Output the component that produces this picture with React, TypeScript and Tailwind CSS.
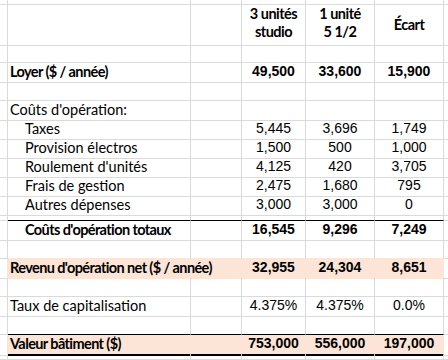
type Line = "gray" | "peach" | "black" | "black2";

type RowProps = {
  h: string;
  fill?: boolean;
  bottom?: Line;
  label?: string;
  indent?: boolean;
  bold?: boolean;
  vals?: string[];
  valBold?: boolean;
};

const cols = "grid grid-cols-[8px_183px_51px_64px_69px_69px_4px]";
const label = "font-['Lato',sans-serif] text-[14.5px] leading-[17px] text-black";
const num = "font-['Liberation_Sans',Arial,sans-serif] text-[14px] leading-[16px] text-black";

const bottomClass: Record<Line, string> = {
  gray: "border-b border-b-[#dadada]",
  peach: "border-b border-b-[#fce4d6]",
  black: "border-b border-b-black",
  black2: "border-b-2 border-b-black",
};

function Row({ h, fill, bottom = "gray", label: text, indent, bold, vals, valBold }: RowProps) {
  const bg = fill ? "bg-[#fce4d6]" : "";
  const right = fill ? "border-r border-r-[#fce4d6]" : "border-r border-r-[#dadada]";
  const inner = `${bg} ${right} ${bottomClass[bottom]}`;
  return (
    <div className={`${cols} ${h}`}>
      <div className={`border-b border-b-[#dadada] ${right}`} />
      <div className={`${inner} flex items-end pb-[2px] ${indent ? "pl-[17px]" : "pl-[2px]"}`}>
        {text && (
          <span
            className={`${label} relative z-10 whitespace-nowrap ${bold ? "font-bold tracking-[-0.6px]" : ""}`}
          >
            {text}
          </span>
        )}
      </div>
      <div className={inner} />
      {[0, 1, 2].map((i) => (
        <div key={i} className={`${inner} flex items-end justify-center pb-[3px]`}>
          {vals && <span className={`${num} ${valBold ? "font-bold" : ""}`}>{vals[i]}</span>}
        </div>
      ))}
      <div className="border-b border-b-[#dadada]" />
    </div>
  );
}

function Header() {
  const cell = "border-r border-r-[#dadada] border-b border-b-[#dadada]";
  const head = `${label} font-bold tracking-[-0.5px]`;
  return (
    <div className={`${cols} h-[39px]`}>
      <div className={cell} />
      <div className={cell} />
      <div className={cell} />
      <div className={`${cell} flex flex-col items-center justify-end pb-[4px] ${head} leading-[18px]`}>
        <span>3 unités</span>
        <span>studio</span>
      </div>
      <div className={`${cell} flex flex-col items-center justify-end pb-[4px] ${head} leading-[18px]`}>
        <span>1 unité</span>
        <span>5 1/2</span>
      </div>
      <div className={`${cell} flex items-center justify-center pb-[2px] ${head}`}>
        <span>Écart</span>
      </div>
      <div className="border-b border-b-[#dadada]" />
    </div>
  );
}

export default function App() {
  return (
    <div className="h-[360px] w-[448px] overflow-hidden bg-white">
      <Row h="h-[5px]" />
      <Header />
      <Row h="h-[19px]" />
      <Row h="h-[19px]" label="Loyer ($ / année)" bold vals={["49,500", "33,600", "15,900"]} valBold />
      <Row h="h-[19px]" />
      <Row h="h-[19px]" label="Coûts d'opération:" />
      <Row h="h-[19px]" label="Taxes" indent vals={["5,445", "3,696", "1,749"]} />
      <Row h="h-[19px]" label="Provision électros" indent vals={["1,500", "500", "1,000"]} />
      <Row h="h-[19px]" label="Roulement d'unités" indent vals={["4,125", "420", "3,705"]} />
      <Row h="h-[19px]" label="Frais de gestion" indent vals={["2,475", "1,680", "795"]} />
      <Row h="h-[19px]" label="Autres dépenses" indent vals={["3,000", "3,000", "0"]} />
      <Row h="h-[6px]" bottom="black" />
      <Row h="h-[19px]" label="Coûts d'opération totaux" indent bold vals={["16,545", "9,296", "7,249"]} valBold />
      <Row h="h-[19px]" bottom="peach" />
      <Row h="h-[19px]" fill bottom="peach" label="Revenu d'opération net ($ / année)" bold vals={["32,955", "24,304", "8,651"]} valBold />
      <Row h="h-[19px]" />
      <Row h="h-[19px]" label="Taux de capitalisation" vals={["4.375%", "4.375%", "0.0%"]} />
      <Row h="h-[19px]" bottom="black" />
      <Row h="h-[20px]" fill bottom="black2" label="Valeur bâtiment ($)" bold vals={["753,000", "556,000", "197,000"]} valBold />
      <Row h="h-[5px]" />
    </div>
  );
}
